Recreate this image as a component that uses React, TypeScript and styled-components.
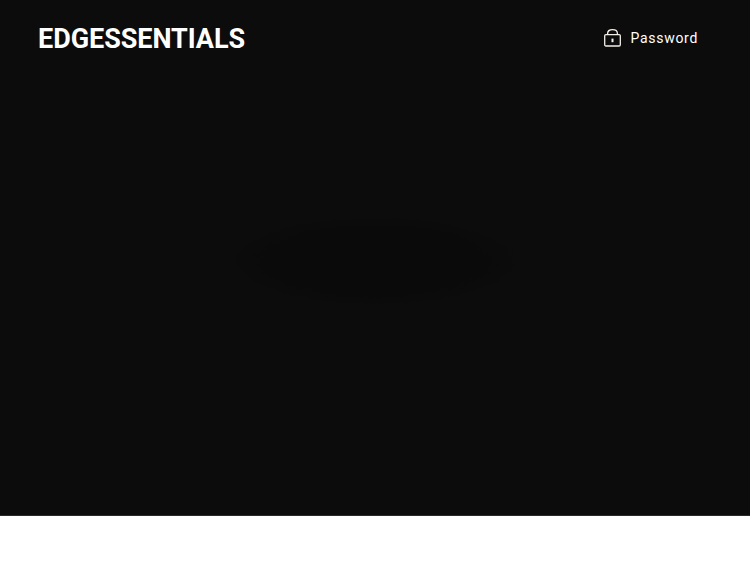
import styled, { createGlobalStyle } from "styled-components";

const GlobalStyle = createGlobalStyle`
  html, body {
    margin: 0;
    padding: 0;
    background: #ffffff;
  }
`;

const Page = styled.div`
  width: 750px;
  height: 563px;
  background: #ffffff;
  overflow: hidden;
`;

const Hero = styled.section`
  height: 516px;
  box-sizing: border-box;
  background: #0c0c0c;
  border-bottom: 1px solid #2a2a2a;
  display: flex;
  flex-direction: column;
`;

const Header = styled.header`
  height: 76px;
  padding: 0 52px 0 38px;
  display: flex;
  align-items: center;
  justify-content: space-between;
`;

const Logo = styled.a`
  padding-top: 1px;
  font-family: "Roboto", "Liberation Sans", sans-serif;
  font-size: 27px;
  font-weight: 700;
  letter-spacing: -0.05px;
  color: #ffffff;
`;

const PasswordLink = styled.a`
  display: flex;
  align-items: center;
  gap: 10px;
  font-family: "Roboto", "Liberation Sans", sans-serif;
  font-size: 14px;
  font-weight: 400;
  letter-spacing: 0.7px;
  color: #ffffff;
`;

const Body = styled.div`
  flex: 1;
  display: flex;
  align-items: flex-start;
  justify-content: center;
  padding-top: 140px;
`;

const Shade = styled.div`
  width: 290px;
  height: 90px;
  border-radius: 50%;
  background: radial-gradient(closest-side, #0a0a0a 70%, #0b0b0b 90%, #0c0c0c 100%);
`;

const LockIcon = () => (
  <svg width="17" height="18" viewBox="0 0 17 18" fill="none" stroke="#f4efe8" strokeWidth="1.3">
    <rect x="0.7" y="5.6" width="15.6" height="11.4" rx="1.2" />
    <path d="M3.6 5.6V4.4C3.6 2 5.8 0.7 8.5 0.7s4.9 1.3 4.9 3.7v1.2" />
    <path d="M8.5 9.6v3.6" strokeWidth="2" />
  </svg>
);

export default function App() {
  return (
    <Page>
      <GlobalStyle />
      <Hero>
        <Header>
          <Logo>EDGESSENTIALS</Logo>
          <PasswordLink>
            <LockIcon />
            Password
          </PasswordLink>
        </Header>
        <Body>
          <Shade />
        </Body>
      </Hero>
    </Page>
  );
}
